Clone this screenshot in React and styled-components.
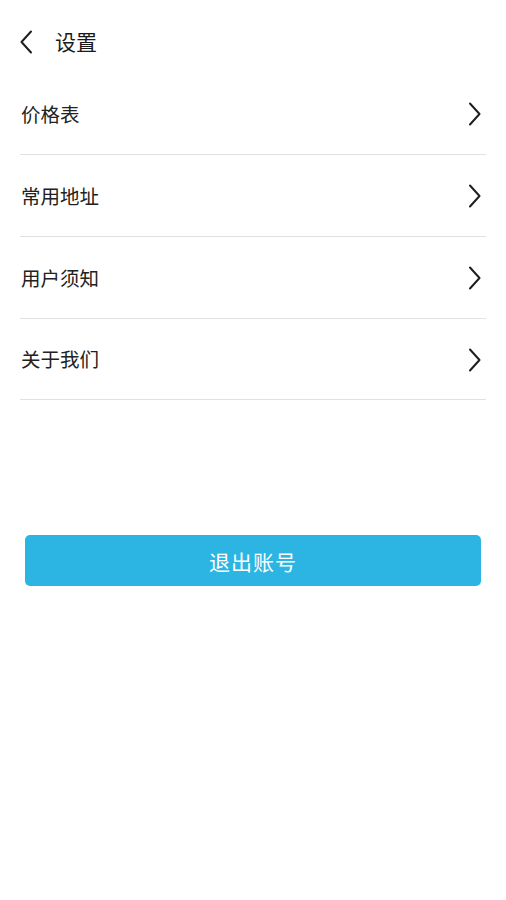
import React from 'react';
import styled, { createGlobalStyle } from 'styled-components';

const GlobalStyle = createGlobalStyle`
  html, body {
    margin: 0;
    padding: 0;
    background: #ffffff;
  }
  body {
    font-family: "Noto Sans CJK SC", "Noto Sans", sans-serif;
    color: #222222;
  }
`

const Page = styled.div`
  width: 506px;
  min-height: 900px;
  background: #ffffff;
  display: flex;
  flex-direction: column;
`
const Header = styled.div`
  height: 57px;
  padding-top: 13px;
  margin-bottom: 3px;
  display: flex;
  align-items: center;
  padding-left: 19px;
`
const BackButton = styled.div`
  width: 16px;
  height: 24px;
  display: flex;
  align-items: center;
  margin-right: 20px;
`
const Title = styled.h1`
  margin: 0;
  font-size: 21px;
  font-weight: 400;
  color: #1a1a1a;
  line-height: 1;
  margin-top: -1px;
`
const List = styled.div`
  display: flex;
  flex-direction: column;
  padding: 0 20px;
`
const Row = styled.div`
  padding-top: 1px;
  box-sizing: border-box;
  display: flex;
  align-items: center;
  justify-content: space-between;
  border-bottom: 1px solid #e1e1e1;
  height: ${p => p.h}px;
`
const Label = styled.span`
  font-size: 19.5px;
  color: #222222;
  padding-left: 1px;
  margin-bottom: 2px;
`
const Arrow = styled.div`
  width: 14px;
  height: 24px;
  margin-right: 4px;
  display: flex;
  align-items: center;
`
const LogoutButton = styled.button`
  margin: 135px 25px 0 25px;
  height: 51px;
  border: none;
  border-radius: 5px;
  background: #2cb5e3;
  color: #ffffff;
  font-family: "Noto Sans CJK SC", "Noto Sans", sans-serif;
  font-size: 21px;
  letter-spacing: 1px;
  cursor: pointer;
`

const ChevronLeft = () => (
  <svg width="14" height="24" viewBox="0 0 14 24" fill="none">
    <path d="M12 1.5 L2.5 12 L12 22.5" stroke="#1f1f1f" strokeWidth="2" strokeLinecap="round" strokeLinejoin="round" />
  </svg>
)

const ChevronRight = () => (
  <svg width="14" height="24" viewBox="0 0 14 24" fill="none">
    <path d="M2 1.5 L11.5 12 L2 22.5" stroke="#1f1f1f" strokeWidth="2" strokeLinecap="round" strokeLinejoin="round" />
  </svg>
)

const items = [
  { label: '价格表', h: 82 },
  { label: '常用地址', h: 82 },
  { label: '用户须知', h: 82 },
  { label: '关于我们', h: 81 },
]

const App = () => (
  <Page>
    <GlobalStyle />
    <Header>
      <BackButton><ChevronLeft /></BackButton>
      <Title>设置</Title>
    </Header>
    <List>
      {items.map(item => (
        <Row key={item.label} h={item.h}>
          <Label>{item.label}</Label>
          <Arrow><ChevronRight /></Arrow>
        </Row>
      ))}
    </List>
    <LogoutButton>退出账号</LogoutButton>
  </Page>
)

export default App;
